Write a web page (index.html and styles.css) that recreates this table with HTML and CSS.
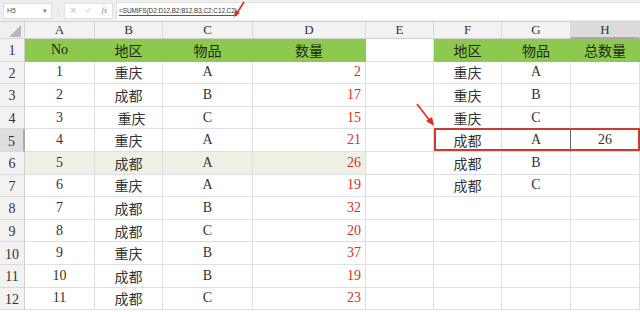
FILE: index.html
```html
<!DOCTYPE html>
<html>
<head>
<meta charset="utf-8">
<link rel="stylesheet" href="styles.css">
</head>
<body>
<div class="app">
  <div class="fbar">
    <div class="namebox"><span class="nb-text">H5</span><span class="nb-drop">▾</span></div>
    <div class="sep">⋮</div>
    <div class="tools">
      <span class="tool">✕</span><span class="tool">✓</span><span class="tool fx">fx</span>
    </div>
    <div class="formula"><span class="ftext">=SUMIFS(D2:D12,B2:B12,B3,C2:C12,C2)</span></div>
  </div>
  <div class="sheet">
    <div class="corner"><svg width="25" height="17" viewBox="0 0 25 17"><polygon points="21,3 21,15 9,15" fill="#b8b8b8"/></svg></div>
    <div class="ch">A</div><div class="ch">B</div><div class="ch">C</div><div class="ch">D</div><div class="ch">E</div><div class="ch">F</div><div class="ch">G</div><div class="ch ch-sel">H</div>

    <div class="rh">1</div>
    <div class="c g">No</div><div class="c g">地区</div><div class="c g">物品</div><div class="c g">数量</div><div class="c"></div><div class="c g">地区</div><div class="c g">物品</div><div class="c g">总数量</div>

    <div class="rh">2</div>
    <div class="c">1</div><div class="c">重庆</div><div class="c">A</div><div class="c n">2</div><div class="c"></div><div class="c">重庆</div><div class="c">A</div><div class="c"></div>

    <div class="rh">3</div>
    <div class="c">2</div><div class="c">成都</div><div class="c">B</div><div class="c n">17</div><div class="c"></div><div class="c">重庆</div><div class="c">B</div><div class="c"></div>

    <div class="rh">4</div>
    <div class="c">3</div><div class="c shift">重庆</div><div class="c">C</div><div class="c n">15</div><div class="c"></div><div class="c">重庆</div><div class="c">C</div><div class="c"></div>

    <div class="rh rh-sel">5</div>
    <div class="c">4</div><div class="c">重庆</div><div class="c">A</div><div class="c n">21</div><div class="c"></div><div class="c">成都</div><div class="c sel-g">A</div><div class="c">26</div>

    <div class="rh">6</div>
    <div class="c hl">5</div><div class="c hl">成都</div><div class="c hl">A</div><div class="c n hl">26</div><div class="c"></div><div class="c">成都</div><div class="c">B</div><div class="c"></div>

    <div class="rh">7</div>
    <div class="c">6</div><div class="c">重庆</div><div class="c">A</div><div class="c n">19</div><div class="c"></div><div class="c">成都</div><div class="c">C</div><div class="c"></div>

    <div class="rh">8</div>
    <div class="c">7</div><div class="c">成都</div><div class="c">B</div><div class="c n">32</div><div class="c"></div><div class="c"></div><div class="c"></div><div class="c"></div>

    <div class="rh">9</div>
    <div class="c">8</div><div class="c">成都</div><div class="c">C</div><div class="c n">20</div><div class="c"></div><div class="c"></div><div class="c"></div><div class="c"></div>

    <div class="rh">10</div>
    <div class="c">9</div><div class="c">重庆</div><div class="c">B</div><div class="c n">37</div><div class="c"></div><div class="c"></div><div class="c"></div><div class="c"></div>

    <div class="rh">11</div>
    <div class="c">10</div><div class="c">成都</div><div class="c">B</div><div class="c n">19</div><div class="c"></div><div class="c"></div><div class="c"></div><div class="c"></div>

    <div class="rh">12</div>
    <div class="c">11</div><div class="c">成都</div><div class="c">C</div><div class="c n">23</div><div class="c"></div><div class="c"></div><div class="c"></div><div class="c"></div>

    <div class="redbox"></div>
  </div>
  <svg class="arrow1" width="16" height="18" viewBox="0 0 16 18"><line x1="12" y1="1" x2="5" y2="12" stroke="#e02b20" stroke-width="1.6"/><polygon points="2,16 3,9 8,12" fill="#e02b20"/></svg>
  <svg class="arrow2" width="22" height="26" viewBox="0 0 22 26"><line x1="2" y1="2" x2="15" y2="19" stroke="#e02b20" stroke-width="1.6"/><polygon points="19,24 11,19 17,15" fill="#e02b20"/></svg>
</div>
</body>
</html>
```
FILE: styles.css
```css
html, body {
  margin: 0;
  padding: 0;
  background: #ffffff;
}
.app {
  position: relative;
  width: 640px;
  height: 312px;
  overflow: hidden;
  font-family: "Liberation Serif", "Noto Sans CJK SC", serif;
}
.fbar {
  height: 22px;
  box-sizing: border-box;
  background: #eeeeee;
  border-bottom: 1px solid #d4d4d4;
  display: flex;
  align-items: center;
  padding: 2px 0 2px 3px;
}
.namebox {
  width: 49px;
  height: 16px;
  box-sizing: border-box;
  background: #fff;
  border: 1px solid #dcdcdc;
  display: flex;
  align-items: center;
  justify-content: space-between;
  padding: 0 4px 0 3px;
  font-family: "Liberation Sans", sans-serif;
  font-size: 7px;
  color: #555;
}
.nb-drop { font-size: 7px; color: #777; }
.sep {
  width: 12px;
  text-align: center;
  font-size: 8px;
  color: #bbb;
}
.tools {
  width: 49px;
  height: 16px;
  box-sizing: border-box;
  background: #fff;
  border: 1px solid #e2e2e2;
  display: flex;
  align-items: center;
  justify-content: space-around;
  font-family: "DejaVu Sans", sans-serif;
  font-size: 8px;
  color: #bdbdbd;
}
.tools .fx { font-style: italic; color: #888; font-family: "Liberation Serif", serif; }
.formula {
  flex: 1;
  margin-left: 3px;
  height: 17px;
  background: #fff;
  border-top: 1px solid #e2e2e2;
  border-left: 1px solid #e2e2e2;
  display: flex;
  align-items: center;
  padding-left: 2px;
}
.ftext {
  font-family: "Liberation Sans Narrow", "Liberation Sans", sans-serif;
  font-size: 6.4px;
  color: #333;
  letter-spacing: -0.05px;
  padding-bottom: 1px;
  border-bottom: 1.5px solid #d9231c;
}
.sheet {
  position: relative;
  display: grid;
  grid-template-columns: 25px 70px 68px 90px 113px 68px 68px 69px 69px;
  grid-template-rows: 17px repeat(12, 22.6px);
}
.corner {
  background: #f0f0f0;
  border-right: 1px solid #d6d6d6;
  border-bottom: 1px solid #d6d6d6;
  box-sizing: border-box;
}
.corner svg { display: block; }
.ch {
  background: #f2f2f2;
  border-right: 1px solid #d9d9d9;
  border-bottom: 1px solid #cfcfcf;
  box-sizing: border-box;
  display: flex;
  align-items: center;
  justify-content: center;
  font-size: 13px;
  color: #333;
}
.ch-sel {
  background: #dcdcdc;
  border-bottom: 2px solid #a9a9a9;
}
.rh {
  background: #f2f2f2;
  border-right: 1px solid #cfcfcf;
  border-bottom: 1px solid #dadada;
  box-sizing: border-box;
  display: flex;
  align-items: center;
  justify-content: center;
  font-size: 14px;
  color: #333;
  padding-top: 3px;
}
.rh-sel {
  background: #dcdedb;
  border-right: 2px solid #a9a9a9;
}
.c {
  border-right: 1px solid #dedee6;
  border-bottom: 1px solid #dedee6;
  box-sizing: border-box;
  display: flex;
  align-items: center;
  justify-content: center;
  font-size: 14px;
  color: #333;
}
.c.shift { padding-left: 6px; }
.c.g {
  background: #8dc84f;
  border-color: #8dc84f;
  color: #1f2a12;
}
.c.n {
  justify-content: flex-end;
  padding-right: 4px;
  color: #d0322b;
}
.c.hl {
  background: #eef0e4;
}
.c.sel-g {
  border-right: 1px solid #666;
}
.redbox {
  position: absolute;
  left: 434px;
  top: 106px;
  width: 206px;
  height: 23px;
  box-sizing: border-box;
  border: 2px solid #cc3a33;
  pointer-events: none;
}
.arrow1 {
  position: absolute;
  left: 232px;
  top: 1px;
}
.arrow2 {
  position: absolute;
  left: 415px;
  top: 102px;
}
```
